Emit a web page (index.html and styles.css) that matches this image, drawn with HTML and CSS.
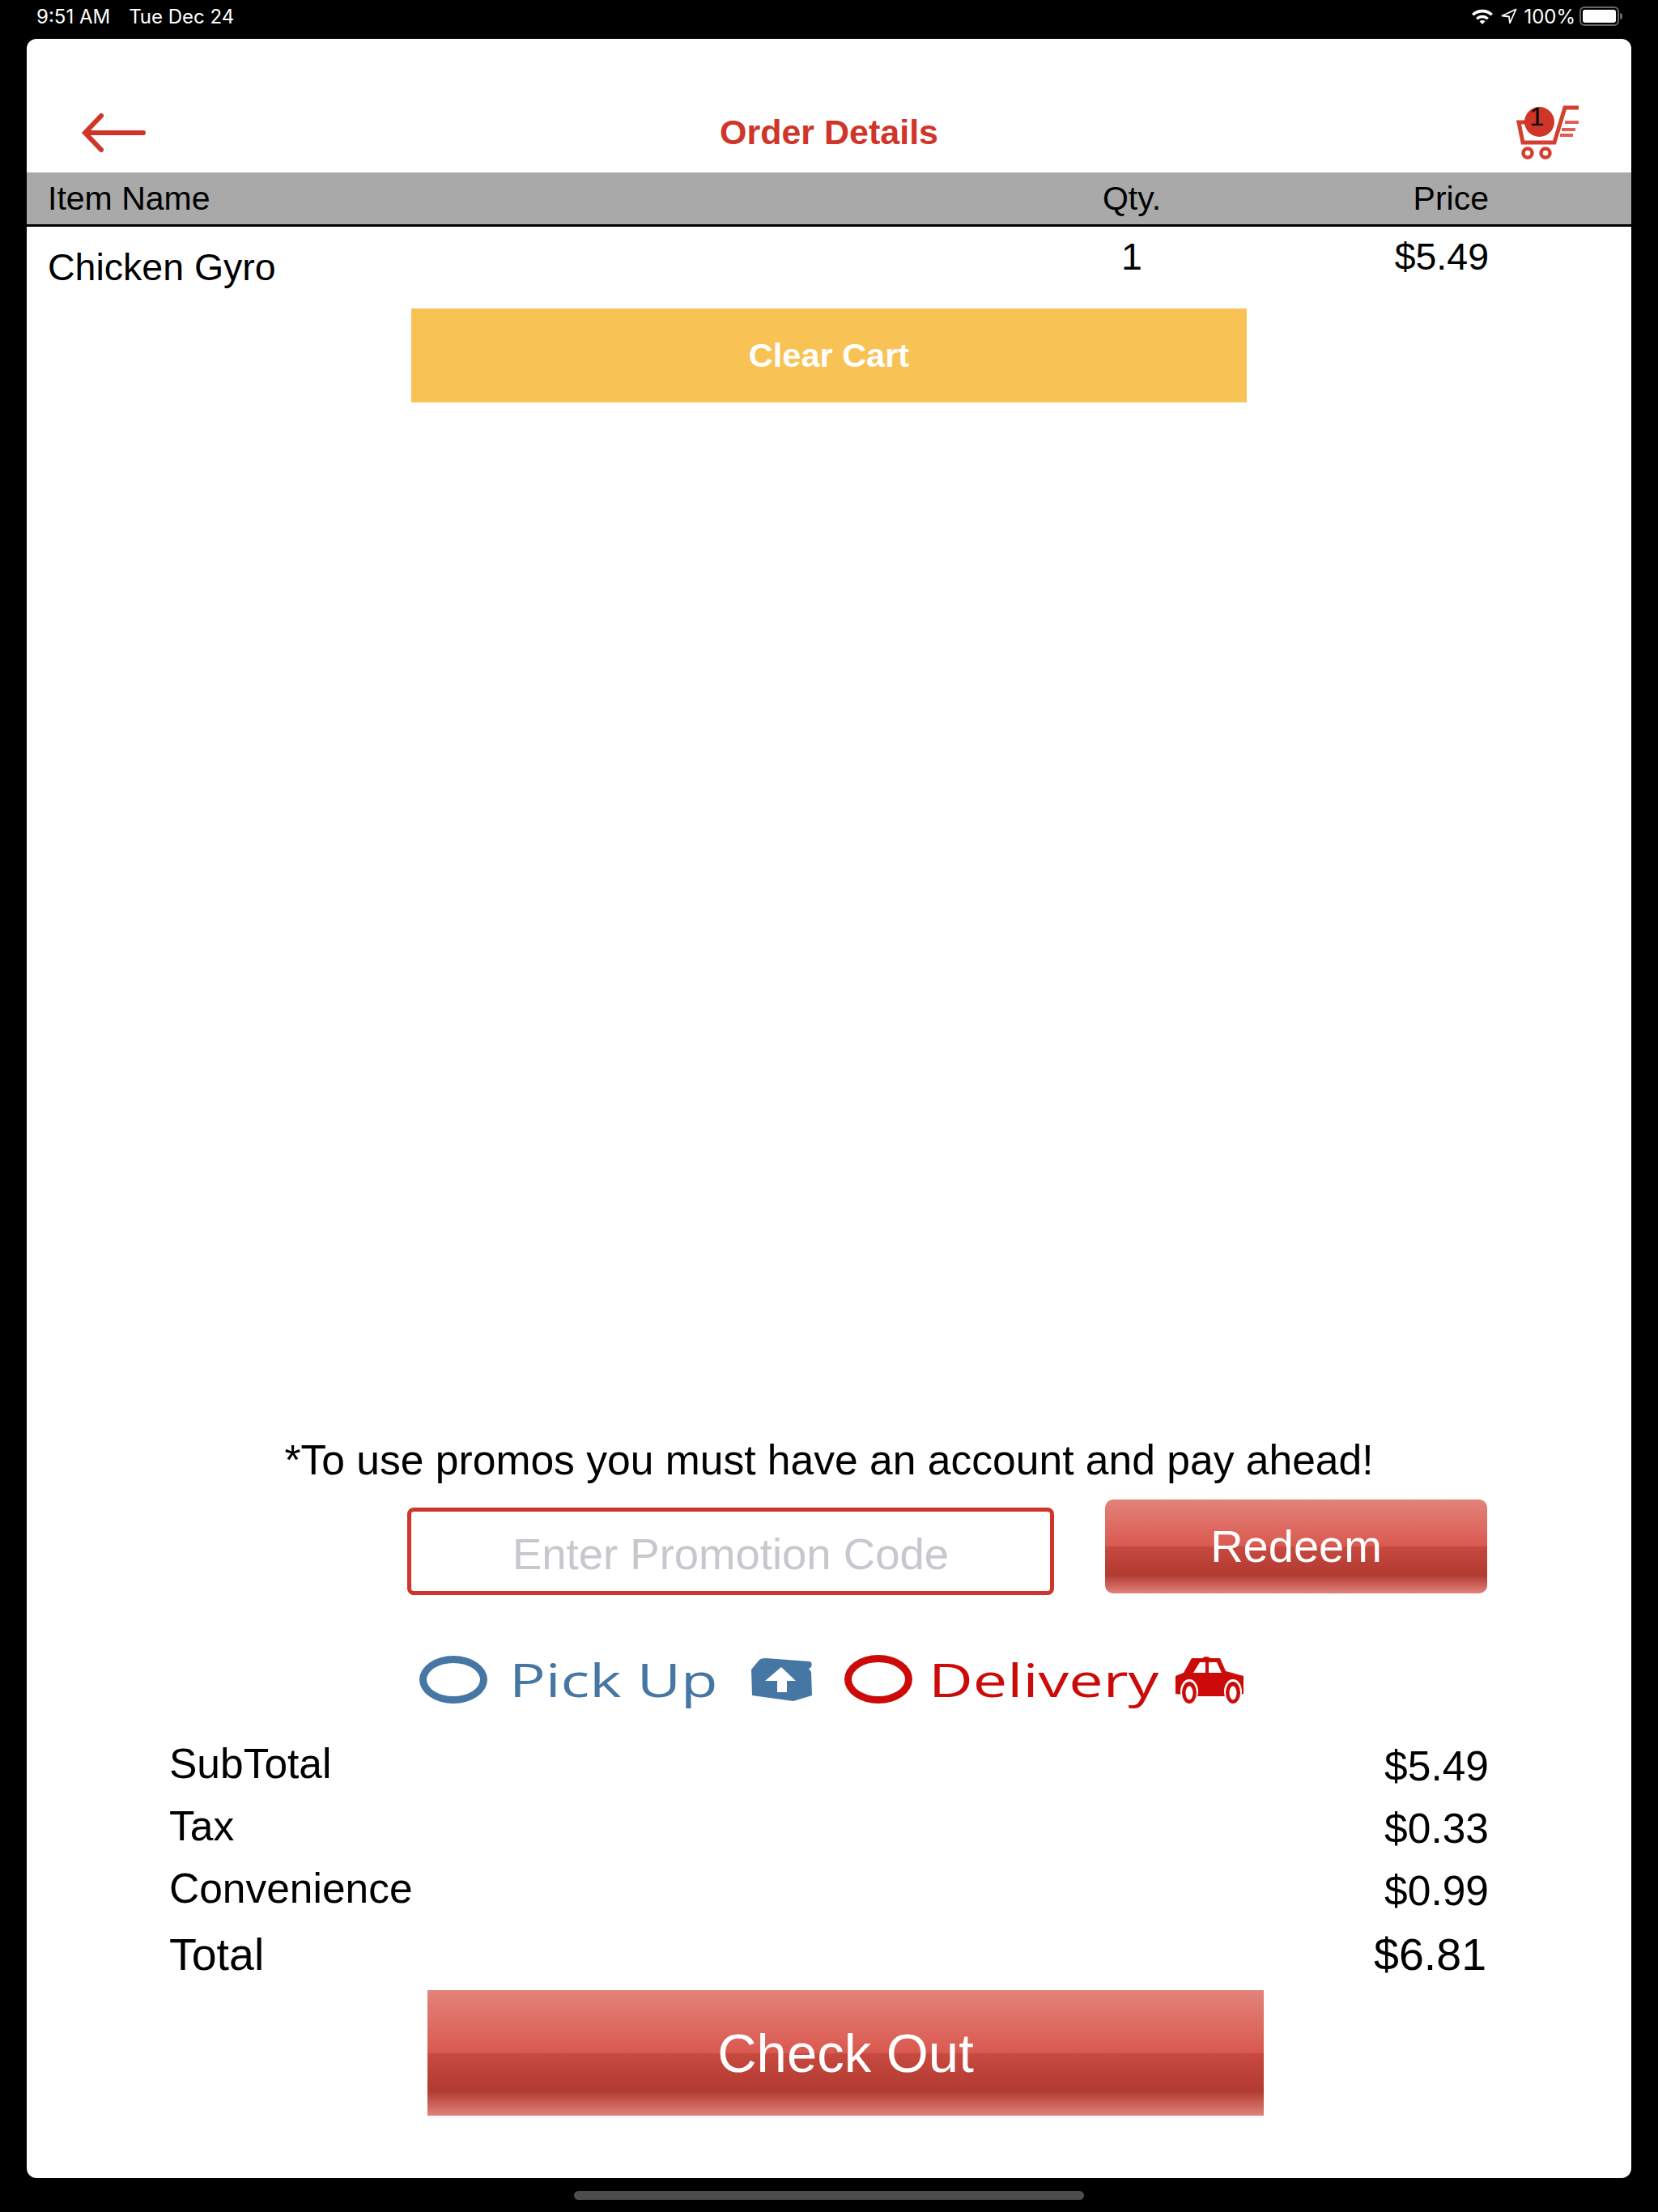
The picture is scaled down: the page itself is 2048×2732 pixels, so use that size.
FILE: index.html
```html
<!DOCTYPE html>
<html lang="en">

<head>
    <meta charset="UTF-8">
    <title>Order Details</title>
    <link rel="stylesheet" href="styles.css">
</head>

<body>

    <!-- iOS status bar -->
    <div class="status-bar">
        <div class="status-left">
            <span>9:51 AM</span>
            <span>Tue Dec 24</span>
        </div>
        <div class="status-right">
            <svg class="wifi" viewBox="0 0 28 20" width="28" height="20">
                <path d="M1 7 C8 0 20 0 27 7 L24.500 9.500 C18.500 4 9.500 4 3.500 9.500 Z" fill="#fff" />
                <path d="M6 12 C10.500 7.500 17.500 7.500 22 12 L19.500 14.500 C16 11.500 12 11.500 8.500 14.500 Z" fill="#fff" />
                <path d="M10.500 16.200 C12.500 14.600 15.500 14.600 17.500 16.200 L14 20 Z" fill="#fff" />
            </svg>
            <svg class="location" viewBox="0 0 20 20" width="20" height="20">
                <path d="M18.500 1.500 L1.500 9.500 L10 10.500 L11 18.500 Z" fill="none" stroke="#fff" stroke-width="1.800" stroke-linejoin="round" />
            </svg>
            <span class="battery-pct">100%</span>
            <div class="battery"><div class="battery-fill"></div></div>
            <div class="battery-nub"></div>
        </div>
    </div>

    <!-- Main card -->
    <div class="card">

        <div class="topbar">
            <svg class="back-arrow" viewBox="0 0 85 50" width="85" height="50">
                <path d="M80 25 H8 M28 4 L8 25 L28 46" fill="none" stroke="#CF3529" stroke-width="6" stroke-linecap="round" stroke-linejoin="miter" />
            </svg>
            <h1>Order Details</h1>
            <div class="cart">
                <svg viewBox="0 0 78 68" width="78" height="68">
                    <path d="M77 3 H60 L47 46 H8 L3 21 H44" fill="none" stroke="#D4402F" stroke-width="5" />
                    <path d="M60 21 H77 M56 30 H73 M54 37 H70" fill="none" stroke="#DE5F54" stroke-width="4" />
                    <circle cx="14" cy="59" r="5.500" fill="none" stroke="#D4402F" stroke-width="4.500" />
                    <circle cx="36" cy="59" r="5.500" fill="none" stroke="#D4402F" stroke-width="4.500" />
                </svg>
                <span class="cart-badge">1</span>
            </div>
        </div>

        <div class="table-head">
            <div class="col-name">Item Name</div>
            <div class="col-qty">Qty.</div>
            <div class="col-price">Price</div>
        </div>

        <div class="table-row">
            <div class="col-name item-name">Chicken Gyro</div>
            <div class="col-qty">1</div>
            <div class="col-price">$5.49</div>
        </div>

        <button class="clear-cart">Clear Cart</button>

        <div class="spacer"></div>

        <div class="promo-note">*To use promos you must have an account and pay ahead!</div>

        <div class="promo-row">
            <input class="promo-input" type="text" placeholder="Enter Promotion Code">
            <button class="gloss-button redeem">Redeem</button>
        </div>

        <div class="order-type">
            <span class="ring ring-blue"></span>
            <span class="type-label label-pickup"><span>Pick Up</span></span>
            <svg class="pickup-icon" viewBox="0 0 75 53" width="75" height="53">
                <path d="M0 14 L10 2 Q12 0 18 0 L72 4 Q76 5 74 11 L71 13 L74 17 L75 46 L52 53 L1 46 Z" fill="#4676A3" />
                <path d="M37 11 L55 28 H44 V42 H32 V28 H17 Z" fill="#fff" />
            </svg>
            <span class="ring ring-red"></span>
            <span class="type-label label-delivery"><span>Delivery</span></span>
            <svg class="car-icon" viewBox="0 0 85 60" width="85" height="60">
                <path d="M0 26 L10 22 L20 4 H33 Q38 0 43 4 H55 L62 20 L84 26 V48 L79 49 V47 H62 V51 H26 V47 H9 V49 L0 48 Z" fill="#CC0A0A" />
                <path d="M22 22 L30 9 H37 V22 Z M41 9 H51 L57 22 H41 Z" fill="#fff" />
                <ellipse cx="17" cy="45" rx="11" ry="15" fill="#fff" />
                <ellipse cx="17" cy="46.500" rx="9" ry="13.500" fill="#CC0A0A" />
                <ellipse cx="17" cy="47" rx="4.500" ry="8.500" fill="#fff" />
                <ellipse cx="71" cy="45" rx="11" ry="15" fill="#fff" />
                <ellipse cx="71" cy="46.500" rx="9" ry="13.500" fill="#CC0A0A" />
                <ellipse cx="71" cy="47" rx="4.500" ry="8.500" fill="#fff" />
            </svg>
        </div>

        <div class="totals">
            <div class="total-row"><span class="label">SubTotal</span><span class="amount">$5.49</span></div>
            <div class="total-row"><span class="label">Tax</span><span class="amount">$0.33</span></div>
            <div class="total-row"><span class="label">Convenience</span><span class="amount">$0.99</span></div>
            <div class="total-row grand-total"><span class="label">Total</span><span class="amount">$6.81</span></div>
        </div>

        <button class="gloss-button check-out">Check Out</button>
    </div>

    <!-- Home indicator -->
    <div class="home-bar"><div class="home-indicator"></div></div>

</body>
</html>
```

FILE: styles.css
```css
body {
    margin: 0;
    width: 2048px;
    height: 2732px;
    background-color: #000;
    font-family: 'Liberation Sans', Arial, sans-serif;
    color: #000;
    display: flex;
    flex-direction: column;
}

/* Status bar */
.status-bar {
    height: 48px;
    padding: 0 44px 8px 45px;
    display: flex;
    justify-content: space-between;
    align-items: center;
    color: #fff;
    font-family: 'Inter', sans-serif;
    font-size: 24px;
    box-sizing: border-box;
}

.status-left {
    display: flex;
    gap: 23px;
}

.status-right {
    display: flex;
    align-items: center;
}

.location {
    margin-left: 9px;
}

.battery-pct {
    margin-left: 8px;
}

.battery {
    margin-left: 5px;
    width: 49px;
    height: 24px;
    box-sizing: border-box;
    border: 2px solid #666;
    border-radius: 6px;
    padding: 2px;
}

.battery-fill {
    height: 100%;
    background-color: #fff;
    border-radius: 3px;
}

.battery-nub {
    width: 3px;
    height: 8px;
    margin-left: 1px;
    background-color: #666;
    border-radius: 0 3px 3px 0;
}

/* Main card */
.card {
    margin: 0 33px;
    height: 2642px;
    background-color: #fff;
    border-radius: 12px;
    display: flex;
    flex-direction: column;
}

.topbar {
    height: 165px;
    padding: 66px 64px 0 64px;
    box-sizing: border-box;
    display: grid;
    grid-template-columns: 1fr auto 1fr;
    align-items: center;
}

.topbar h1 {
    margin: 0;
    font-size: 43px;
    font-weight: bold;
    color: #CF3529;
}

.cart {
    position: relative;
    justify-self: end;
    width: 78px;
    height: 68px;
}

.cart svg {
    display: block;
}

/* The count sits over the cart icon */
.cart-badge {
    position: absolute;
    left: 10px;
    top: 2px;
    width: 37px;
    height: 37px;
    border-radius: 50%;
    background-color: #CF3529;
    font-size: 32px;
    line-height: 25px;
    text-align: center;
    box-sizing: border-box;
    padding-right: 6px;
}

/* Table */
.table-head,
.table-row {
    display: grid;
    grid-template-columns: 1254px 170px 356px;
    padding-left: 26px;
}

.table-head {
    height: 67px;
    align-items: center;
    background-color: #A9A9A9;
    border-bottom: 3px solid #000;
    box-sizing: border-box;
    font-size: 41px;
}

.table-row {
    height: 101px;
    padding-top: 10px;
    box-sizing: border-box;
    font-size: 46.500px;
}

.col-qty {
    text-align: center;
}

.col-price {
    text-align: right;
}

.item-name {
    padding-top: 13px;
}

.clear-cart {
    align-self: center;
    width: 1032px;
    height: 116px;
    background-color: #F9C255;
    border: none;
    color: #fff;
    font-family: inherit;
    font-size: 41.500px;
    font-weight: bold;
}

.spacer {
    flex: 1;
}

/* Promo section */
.promo-note {
    text-align: center;
    font-size: 51.600px;
    line-height: 60px;
}

.promo-row {
    display: flex;
    align-items: flex-start;
    margin: 19px 0 0 470px;
    gap: 63px;
}

.promo-input {
    width: 799px;
    height: 108px;
    margin-top: 10px;
    padding: 6px 0 0;
    box-sizing: border-box;
    border: 5px solid #CF3529;
    border-radius: 8px;
    background-color: #fff;
    font-family: inherit;
    font-size: 54.500px;
    text-align: center;
    outline: none;
}

.promo-input::placeholder {
    color: #C7C7CD;
    opacity: 1;
}

.gloss-button {
    border: none;
    color: #fff;
    font-family: inherit;
    background: linear-gradient(to bottom, #E3837B 0%, #D9594F 50%, #C74A40 50%, #B23A31 80%, #E0827A 100%);
}

.redeem {
    width: 472px;
    height: 116px;
    border-radius: 10px;
    font-size: 56px;
    padding: 0 0 2px;
}

/* Pick up / delivery choice */
.order-type {
    display: flex;
    align-items: center;
    height: 64px;
    margin: 72px 0 0 485px;
}

.ring {
    width: 84px;
    height: 59px;
    box-sizing: border-box;
    border-radius: 50%;
    border: 9px solid #4676A3;
}

.ring-red {
    width: 84px;
    height: 60px;
    margin-left: 40px;
    border-color: #CC0A0A;
}

.type-label {
    display: block;
    font-family: 'Open Sans', sans-serif;
    font-size: 56px;
    font-weight: 500;
    line-height: 64px;
    white-space: nowrap;
}

.type-label span {
    display: inline-block;
    transform-origin: left center;
}

.label-pickup {
    width: 256px;
    margin-left: 27px;
    color: #4676A3;
}

.label-pickup span {
    transform: scaleX(1.33);
}

.label-delivery {
    width: 285px;
    margin-left: 20px;
    color: #CC0A0A;
}

.label-delivery span {
    transform: scaleX(1.35);
}

.pickup-icon {
    margin-left: 43px;
}

.car-icon {
    margin-left: 20px;
}

/* Totals */
.totals {
    margin: 30px 176px 0 176px;
}

.total-row {
    display: flex;
    justify-content: space-between;
    align-items: flex-end;
    height: 77px;
    font-size: 51.500px;
}

.total-row .label {
    padding-bottom: 5px;
}

.total-row .amount {
    padding-bottom: 2px;
}

.grand-total {
    height: 85px;
    font-size: 55.500px;
}

.grand-total .label,
.grand-total .amount {
    padding-bottom: 6px;
}

.grand-total .amount {
    margin-right: 3px;
}

.check-out {
    align-self: flex-start;
    margin: 6px 0 77px 495px;
    width: 1033px;
    height: 155px;
    font-size: 67px;
}

/* Home indicator */
.home-bar {
    flex: 1;
    display: flex;
    justify-content: center;
    align-items: flex-start;
    padding-top: 16px;
}

.home-indicator {
    width: 630px;
    height: 11px;
    background-color: #4D4D4D;
    border-radius: 6px;
}
```
